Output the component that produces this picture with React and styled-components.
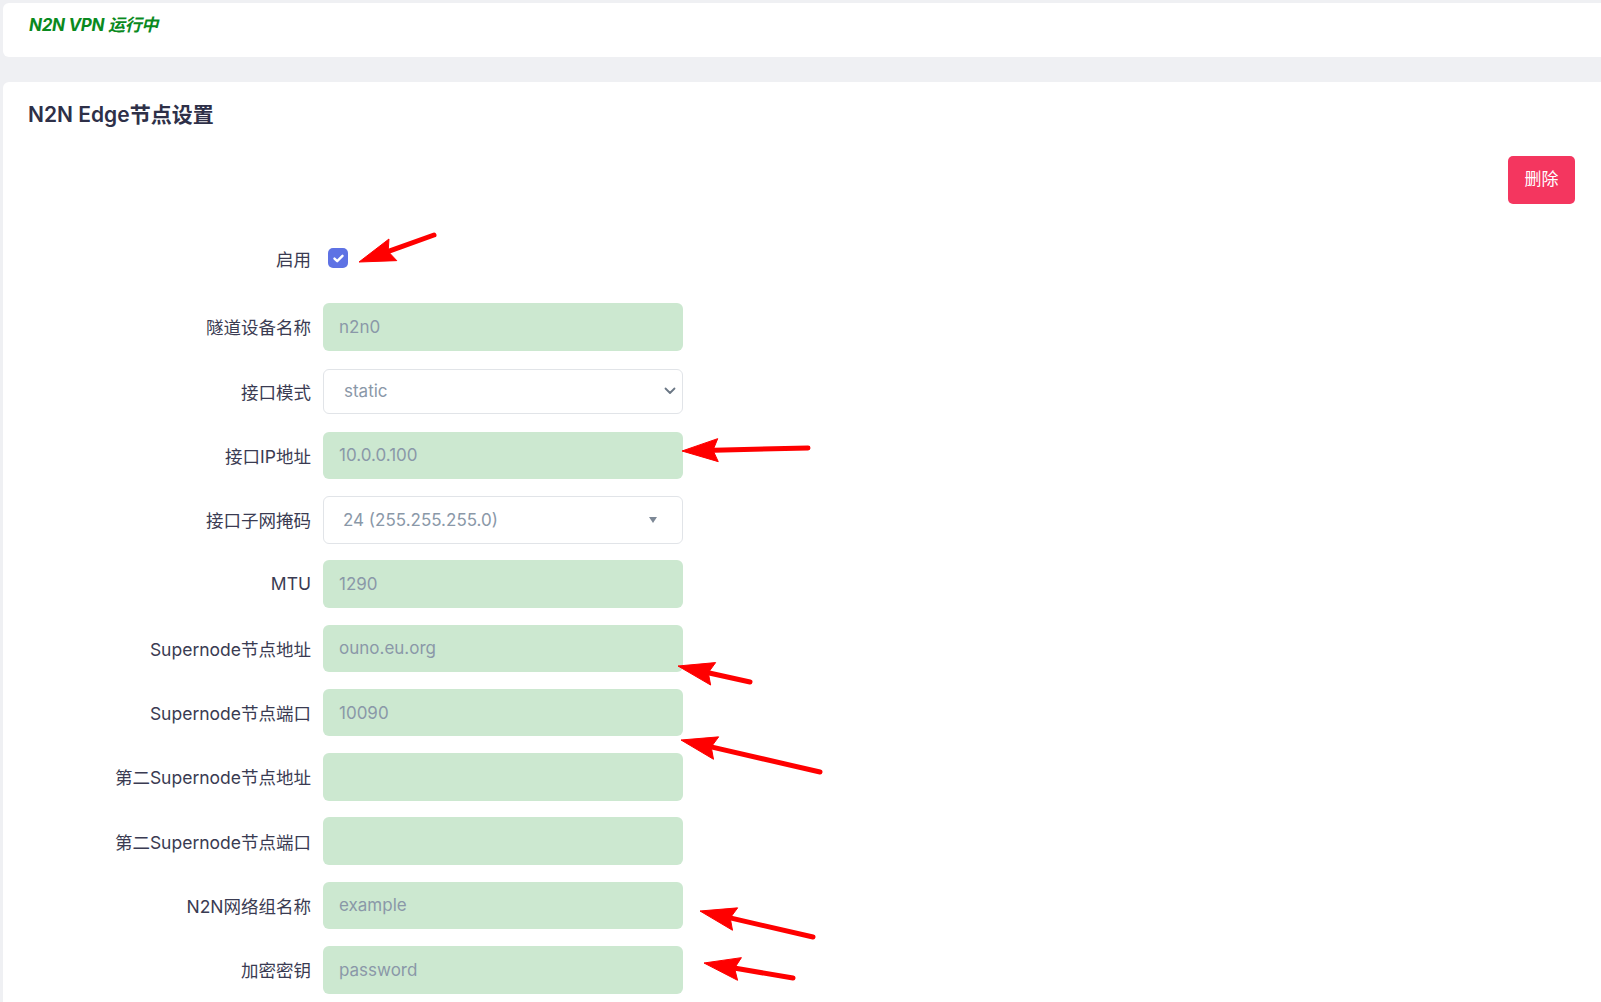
import React from 'react'
import styled, { createGlobalStyle } from 'styled-components';

const GlobalStyle = createGlobalStyle`
    html, body {
        margin: 0;
        padding: 0;
        background: #eff0f3;
        font-family: Inter, "Noto Sans CJK SC", sans-serif;
    }
`;

const Page = styled.div`
    position: relative;
    width: 1601px;
    height: 1002px;
    overflow: hidden;
    padding: 3px 0 0 3px;
    box-sizing: border-box;
`;

const StatusCard = styled.div`
    background: #fff;
    border-radius: 6px 0 0 6px;
    height: 54px;
    box-sizing: border-box;
    padding: 12px 0 0 26px;
`;

const StatusText = styled.span`
    display: block;
    line-height: 20px;
    color: #0a8a1e;
    font-style: italic;
    font-weight: 700;
    font-size: 17px;
    letter-spacing: -0.3px;
`;

const SettingsCard = styled.div`
    margin-top: 25px;
    background: #fff;
    border-radius: 6px 0 0 6px;
    padding: 21px 26px 40px 25px;
`;

const Title = styled.h3`
    margin: 0;
    font-size: 21px;
    line-height: 24px;
    font-weight: 600;
    color: #2e3048;
`;

const Toolbar = styled.div`
    display: flex;
    justify-content: flex-end;
    margin-top: 29px;
`;

const DangerButton = styled.button`
    width: 67px;
    height: 48px;
    border: none;
    border-radius: 5px;
    background: #f4365f;
    color: #fff;
    font-family: inherit;
    font-size: 17px;
    line-height: 1;
    padding: 0 0 1px;
    cursor: pointer;
`;

const Form = styled.div`
    margin-top: 25.5px;
    display: flex;
    flex-direction: column;
    gap: 16.3px;
`;

const Row = styled.div`
    display: flex;
    align-items: center;
    gap: 12px;
    min-height: ${props => props.tall ? "57px" : "48px"};
`;

const Label = styled.label`
    width: 283px;
    text-align: right;
    font-size: 17.5px;
    color: #3a3b52;
    white-space: nowrap;
`;

const TextInput = styled.input`
    width: 360px;
    height: 47.5px;
    box-sizing: border-box;
    border: none;
    border-radius: 6px;
    background: #cce8d0;
    padding: 0 16px;
    font-family: inherit;
    font-size: 17px;
    color: #8a98a8;
    outline: none;
`;

const SelectBox = styled.div`
    width: 360px;
    height: ${props => props.h}px;
    box-sizing: border-box;
    border: 1px solid #e1e4e8;
    border-radius: 6px;
    background: #fff;
    display: flex;
    align-items: center;
    justify-content: space-between;
    padding: 0 ${props => props.pr}px 0 ${props => props.pl}px;
    font-size: 17px;
    color: #8a98a8;
`;

const CheckBox = styled.span`
    width: 20px;
    height: 20px;
    margin-left: 5px;
    border-radius: 5px;
    background: #5e72e4;
    display: inline-flex;
    align-items: center;
    justify-content: center;
`;

const Annotations = styled.svg`
    position: absolute;
    top: 0;
    left: 0;
    pointer-events: none;
`;

const arrows = [
    [[434, 235], [359, 262]],
    [[808, 448], [682, 451]],
    [[750, 682], [678, 666]],
    [[820, 772], [681, 740]],
    [[813, 937], [700, 911]],
    [[793, 978], [704, 963]],
];

function Arrow({ tail, tip }) {
    const dx = tip[0] - tail[0], dy = tip[1] - tail[1];
    const len = Math.hypot(dx, dy);
    const ux = dx / len, uy = dy / len;
    const nx = -uy, ny = ux;
    const L = 36, W = 11.5;
    const bx = tip[0] - ux * L, by = tip[1] - uy * L;
    const pts = [
        [tip[0], tip[1]],
        [bx + nx * W, by + ny * W],
        [bx + ux * 5, by + uy * 5],
        [bx - nx * W, by - ny * W],
    ].map(p => p.join(',')).join(' ');
    return (
        <g fill="#f00" stroke="#f00">
            <line x1={tail[0]} y1={tail[1]} x2={bx + ux * 4} y2={by + uy * 4} strokeWidth="5" strokeLinecap="round" />
            <polygon points={pts} strokeWidth="1" strokeLinejoin="round" />
        </g>
    );
}

const fields = [
    { label: '隧道设备名称', value: 'n2n0' },
    { label: '接口模式', select: 'chevron', value: 'static' },
    { label: '接口IP地址', value: '10.0.0.100' },
    { label: '接口子网掩码', select: 'caret', value: '24 (255.255.255.0)' },
    { label: 'MTU', value: '1290' },
    { label: 'Supernode节点地址', value: 'ouno.eu.org' },
    { label: 'Supernode节点端口', value: '10090' },
    { label: '第二Supernode节点地址', value: '' },
    { label: '第二Supernode节点端口', value: '' },
    { label: 'N2N网络组名称', value: 'example' },
    { label: '加密密钥', value: 'password' },
];

function Field({ field }) {
    if (field.select === 'chevron') {
        return (
            <SelectBox h={45} pl={20} pr={6}>
                <span>{field.value}</span>
                <svg width="12" height="8" viewBox="0 0 12 8">
                    <path d="M1.5 1.5 L6 6 L10.5 1.5" fill="none" stroke="#6b7785" strokeWidth="1.8" strokeLinecap="round" strokeLinejoin="round" />
                </svg>
            </SelectBox>
        );
    }
    if (field.select === 'caret') {
        return (
            <SelectBox h={48} pl={19} pr={25}>
                <span>{field.value}</span>
                <svg width="8" height="6" viewBox="0 0 8 6">
                    <path d="M0 0 L8 0 L4 6 Z" fill="#7d8896" />
                </svg>
            </SelectBox>
        );
    }
    return <TextInput defaultValue={field.value} readOnly />;
}

export default function App() {
    return (
        <Page>
            <GlobalStyle />
            <StatusCard>
                <StatusText>N2N VPN 运行中</StatusText>
            </StatusCard>
            <SettingsCard>
                <Title>N2N Edge节点设置</Title>
                <Toolbar>
                    <DangerButton>删除</DangerButton>
                </Toolbar>
                <Form>
                    <Row tall>
                        <Label>启用</Label>
                        <CheckBox>
                            <svg width="11" height="9" viewBox="0 0 11 9">
                                <path d="M1.5 4.6 L4.2 7.2 L9.5 1.8" fill="none" stroke="#fff" strokeWidth="2.4" strokeLinecap="round" strokeLinejoin="round" />
                            </svg>
                        </CheckBox>
                    </Row>
                    {fields.map(f => (
                        <Row key={f.label}>
                            <Label>{f.label}</Label>
                            <Field field={f} />
                        </Row>
                    ))}
                </Form>
            </SettingsCard>
            <Annotations width="1601" height="1002" viewBox="0 0 1601 1002">
                {arrows.map((a, i) => <Arrow key={i} tail={a[0]} tip={a[1]} />)}
            </Annotations>
        </Page>
    );
}
